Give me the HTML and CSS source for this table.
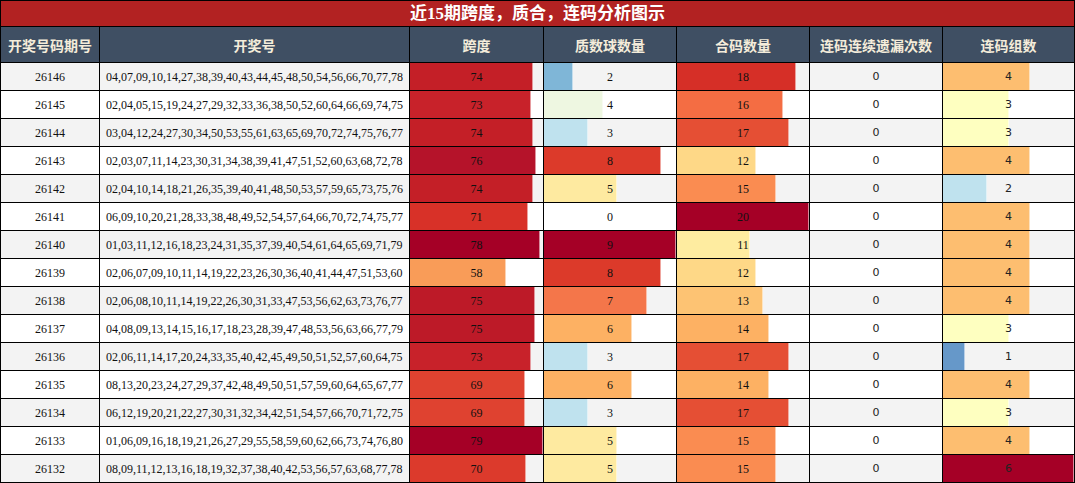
FILE: index.html
```html
<!DOCTYPE html>
<html lang="zh">
<head>
<meta charset="utf-8">
<title>近15期跨度，质合，连码分析图示</title>
<link rel="stylesheet" href="styles.css">
</head>
<body>
<div class="sheet">
  <div class="title">近15期跨度，质合，连码分析图示</div>
  <div class="hd">开奖号码期号</div>
  <div class="hd">开奖号</div>
  <div class="hd">跨度</div>
  <div class="hd">质数球数量</div>
  <div class="hd">合码数量</div>
  <div class="hd">连码连续遗漏次数</div>
  <div class="hd">连码组数</div>

  <div class="c id g">26146</div><div class="c nums g">04,07,09,10,14,27,38,39,40,43,44,45,48,50,54,56,66,70,77,78</div>
  <div class="c bc g"><div class="bar" style="width:92.5%;background:#c41f27"></div><span class="v">74</span></div>
  <div class="c bc g"><div class="bar" style="width:22.2%;background:#7fb6d7"></div><span class="v">2</span></div>
  <div class="c bc g"><div class="bar" style="width:90%;background:#d62f27"></div><span class="v">18</span></div>
  <div class="c bc ss g"><span class="v">0</span></div>
  <div class="c bc ss g"><div class="bar" style="width:66.7%;background:#fdbe70"></div><span class="v">4</span></div>

  <div class="c id">26145</div><div class="c nums">02,04,05,15,19,24,27,29,32,33,36,38,50,52,60,64,66,69,74,75</div>
  <div class="c bc"><div class="bar" style="width:91.2%;background:#c8222a"></div><span class="v">73</span></div>
  <div class="c bc"><div class="bar" style="width:44.4%;background:#eef7e1"></div><span class="v">4</span></div>
  <div class="c bc"><div class="bar" style="width:80%;background:#f46d43"></div><span class="v">16</span></div>
  <div class="c bc ss"><span class="v">0</span></div>
  <div class="c bc ss"><div class="bar" style="width:50%;background:#feffc0"></div><span class="v">3</span></div>

  <div class="c id g">26144</div><div class="c nums g">03,04,12,24,27,30,34,50,53,55,61,63,65,69,70,72,74,75,76,77</div>
  <div class="c bc g"><div class="bar" style="width:92.5%;background:#c41f27"></div><span class="v">74</span></div>
  <div class="c bc g"><div class="bar" style="width:33.3%;background:#bfe2ee"></div><span class="v">3</span></div>
  <div class="c bc g"><div class="bar" style="width:85%;background:#e54f34"></div><span class="v">17</span></div>
  <div class="c bc ss g"><span class="v">0</span></div>
  <div class="c bc ss g"><div class="bar" style="width:50%;background:#feffc0"></div><span class="v">3</span></div>

  <div class="c id">26143</div><div class="c nums">02,03,07,11,14,23,30,31,34,38,39,41,47,51,52,60,63,68,72,78</div>
  <div class="c bc"><div class="bar" style="width:95%;background:#b5132a"></div><span class="v">76</span></div>
  <div class="c bc"><div class="bar" style="width:88.9%;background:#dc3a2a"></div><span class="v">8</span></div>
  <div class="c bc"><div class="bar" style="width:60%;background:#fed887"></div><span class="v">12</span></div>
  <div class="c bc ss"><span class="v">0</span></div>
  <div class="c bc ss"><div class="bar" style="width:66.7%;background:#fdbe70"></div><span class="v">4</span></div>

  <div class="c id g">26142</div><div class="c nums g">02,04,10,14,18,21,26,35,39,40,41,48,50,53,57,59,65,73,75,76</div>
  <div class="c bc g"><div class="bar" style="width:92.5%;background:#c41f27"></div><span class="v">74</span></div>
  <div class="c bc g"><div class="bar" style="width:55.6%;background:#feeaa0"></div><span class="v">5</span></div>
  <div class="c bc g"><div class="bar" style="width:75%;background:#fa8c51"></div><span class="v">15</span></div>
  <div class="c bc ss g"><span class="v">0</span></div>
  <div class="c bc ss g"><div class="bar" style="width:33.3%;background:#bfe2ee"></div><span class="v">2</span></div>

  <div class="c id">26141</div><div class="c nums">06,09,10,20,21,28,33,38,48,49,52,54,57,64,66,70,72,74,75,77</div>
  <div class="c bc"><div class="bar" style="width:88.8%;background:#d83128"></div><span class="v">71</span></div>
  <div class="c bc"><span class="v">0</span></div>
  <div class="c bc"><div class="bar" style="width:100%;background:#a50026"></div><span class="v">20</span></div>
  <div class="c bc ss"><span class="v">0</span></div>
  <div class="c bc ss"><div class="bar" style="width:66.7%;background:#fdbe70"></div><span class="v">4</span></div>

  <div class="c id g">26140</div><div class="c nums g">01,03,11,12,16,18,23,24,31,35,37,39,40,54,61,64,65,69,71,79</div>
  <div class="c bc g"><div class="bar" style="width:97.5%;background:#a50026"></div><span class="v">78</span></div>
  <div class="c bc g"><div class="bar" style="width:100%;background:#a50026"></div><span class="v">9</span></div>
  <div class="c bc g"><div class="bar" style="width:55%;background:#feeca0"></div><span class="v">11</span></div>
  <div class="c bc ss g"><span class="v">0</span></div>
  <div class="c bc ss g"><div class="bar" style="width:66.7%;background:#fdbe70"></div><span class="v">4</span></div>

  <div class="c id">26139</div><div class="c nums">02,06,07,09,10,11,14,19,22,23,26,30,36,40,41,44,47,51,53,60</div>
  <div class="c bc"><div class="bar" style="width:72.5%;background:#f99c58"></div><span class="v">58</span></div>
  <div class="c bc"><div class="bar" style="width:88.9%;background:#dc3a2a"></div><span class="v">8</span></div>
  <div class="c bc"><div class="bar" style="width:60%;background:#fed887"></div><span class="v">12</span></div>
  <div class="c bc ss"><span class="v">0</span></div>
  <div class="c bc ss"><div class="bar" style="width:66.7%;background:#fdbe70"></div><span class="v">4</span></div>

  <div class="c id g">26138</div><div class="c nums g">02,06,08,10,11,14,19,22,26,30,31,33,47,53,56,62,63,73,76,77</div>
  <div class="c bc g"><div class="bar" style="width:93.8%;background:#bd1a28"></div><span class="v">75</span></div>
  <div class="c bc g"><div class="bar" style="width:77.8%;background:#f4764a"></div><span class="v">7</span></div>
  <div class="c bc g"><div class="bar" style="width:65%;background:#fdc373"></div><span class="v">13</span></div>
  <div class="c bc ss g"><span class="v">0</span></div>
  <div class="c bc ss g"><div class="bar" style="width:66.7%;background:#fdbe70"></div><span class="v">4</span></div>

  <div class="c id">26137</div><div class="c nums">04,08,09,13,14,15,16,17,18,23,28,39,47,48,53,56,63,66,77,79</div>
  <div class="c bc"><div class="bar" style="width:93.8%;background:#bd1a28"></div><span class="v">75</span></div>
  <div class="c bc"><div class="bar" style="width:66.7%;background:#fdb163"></div><span class="v">6</span></div>
  <div class="c bc"><div class="bar" style="width:70%;background:#fdb163"></div><span class="v">14</span></div>
  <div class="c bc ss"><span class="v">0</span></div>
  <div class="c bc ss"><div class="bar" style="width:50%;background:#feffc0"></div><span class="v">3</span></div>

  <div class="c id g">26136</div><div class="c nums g">02,06,11,14,17,20,24,33,35,40,42,45,49,50,51,52,57,60,64,75</div>
  <div class="c bc g"><div class="bar" style="width:91.2%;background:#c8222a"></div><span class="v">73</span></div>
  <div class="c bc g"><div class="bar" style="width:33.3%;background:#bfe2ee"></div><span class="v">3</span></div>
  <div class="c bc g"><div class="bar" style="width:85%;background:#e54f34"></div><span class="v">17</span></div>
  <div class="c bc ss g"><span class="v">0</span></div>
  <div class="c bc ss g"><div class="bar" style="width:16.7%;background:#6698c9"></div><span class="v">1</span></div>

  <div class="c id">26135</div><div class="c nums">08,13,20,23,24,27,29,37,42,48,49,50,51,57,59,60,64,65,67,77</div>
  <div class="c bc"><div class="bar" style="width:86.2%;background:#df4230"></div><span class="v">69</span></div>
  <div class="c bc"><div class="bar" style="width:66.7%;background:#fdb163"></div><span class="v">6</span></div>
  <div class="c bc"><div class="bar" style="width:70%;background:#fdb163"></div><span class="v">14</span></div>
  <div class="c bc ss"><span class="v">0</span></div>
  <div class="c bc ss"><div class="bar" style="width:66.7%;background:#fdbe70"></div><span class="v">4</span></div>

  <div class="c id g">26134</div><div class="c nums g">06,12,19,20,21,22,27,30,31,32,34,42,51,54,57,66,70,71,72,75</div>
  <div class="c bc g"><div class="bar" style="width:86.2%;background:#df4230"></div><span class="v">69</span></div>
  <div class="c bc g"><div class="bar" style="width:33.3%;background:#bfe2ee"></div><span class="v">3</span></div>
  <div class="c bc g"><div class="bar" style="width:85%;background:#e54f34"></div><span class="v">17</span></div>
  <div class="c bc ss g"><span class="v">0</span></div>
  <div class="c bc ss g"><div class="bar" style="width:50%;background:#feffc0"></div><span class="v">3</span></div>

  <div class="c id">26133</div><div class="c nums">01,06,09,16,18,19,21,26,27,29,55,58,59,60,62,66,73,74,76,80</div>
  <div class="c bc"><div class="bar" style="width:100%;background:#a50026"></div><span class="v">79</span></div>
  <div class="c bc"><div class="bar" style="width:55.6%;background:#feeaa0"></div><span class="v">5</span></div>
  <div class="c bc"><div class="bar" style="width:75%;background:#fa8c51"></div><span class="v">15</span></div>
  <div class="c bc ss"><span class="v">0</span></div>
  <div class="c bc ss"><div class="bar" style="width:66.7%;background:#fdbe70"></div><span class="v">4</span></div>

  <div class="c id g">26132</div><div class="c nums g">08,09,11,12,13,16,18,19,32,37,38,40,42,53,56,57,63,68,77,78</div>
  <div class="c bc g"><div class="bar" style="width:87.5%;background:#dc3a2c"></div><span class="v">70</span></div>
  <div class="c bc g"><div class="bar" style="width:55.6%;background:#feeaa0"></div><span class="v">5</span></div>
  <div class="c bc g"><div class="bar" style="width:75%;background:#fa8c51"></div><span class="v">15</span></div>
  <div class="c bc ss g"><span class="v">0</span></div>
  <div class="c bc ss g"><div class="bar" style="width:100%;background:#a50026"></div><span class="v">6</span></div>
</div>
</body>
</html>
```

FILE: styles.css
```css
html, body {
  margin: 0;
  padding: 0;
  background: #ffffff;
}

.sheet {
  width: 1075px;
  height: 483px;
  box-sizing: border-box;
  padding: 1px;
  background: #000000;
  display: grid;
  grid-template-columns: 98px 309px 133px 132px 132px 132px 131px;
  grid-template-rows: 25px 35px repeat(15, 27px);
  gap: 1px;
}

.title {
  grid-column: 1 / -1;
  background: #b22222;
  color: #ffffff;
  font-family: "Liberation Serif", "Noto Sans CJK SC", serif;
  font-weight: bold;
  font-size: 17px;
  display: flex;
  align-items: center;
  justify-content: center;
  line-height: 1;
}

.hd {
  background: #3f4f63;
  color: #f4ecda;
  font-family: "Noto Sans CJK SC", sans-serif;
  font-weight: bold;
  font-size: 14px;
  display: flex;
  align-items: center;
  justify-content: center;
  line-height: 1;
}

.c {
  background: #ffffff;
  color: #111111;
  font-family: "Liberation Serif", serif;
  font-size: 12px;
  line-height: 1;
  overflow: hidden;
}

.c.g {
  background: #f3f3f3;
}

.c.ss {
  font-family: "DejaVu Sans", sans-serif;
  font-size: 11px;
  color: #222222;
}

.id {
  display: flex;
  align-items: center;
  justify-content: center;
}

.nums {
  display: flex;
  align-items: center;
  padding-left: 6px;
  white-space: nowrap;
}

.bc {
  display: grid;
  grid-template-columns: 1fr;
  grid-template-rows: 1fr;
}

.bar {
  grid-area: 1 / 1;
  height: 100%;
  box-sizing: border-box;
  border-right: 1px solid rgba(255, 255, 255, 0.55);
}

.v {
  grid-area: 1 / 1;
  align-self: center;
  justify-self: center;
  position: relative;
}
```
